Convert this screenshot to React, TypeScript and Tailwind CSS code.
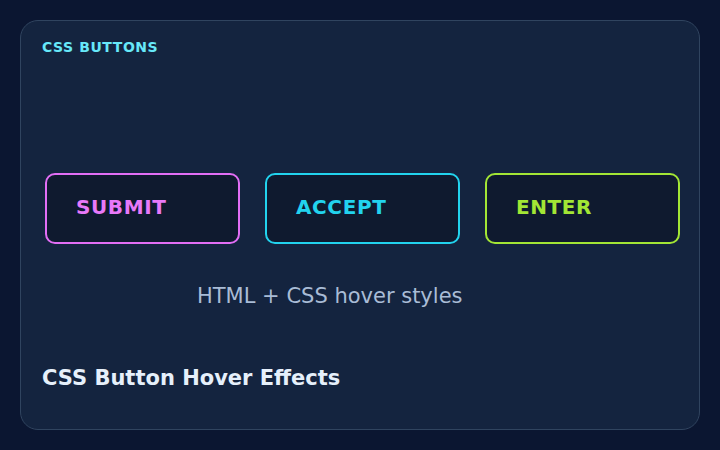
export default function App() {
  const buttons = [
    { label: "SUBMIT", cls: "border-[#e26ef5] text-[#e879f9]" },
    { label: "ACCEPT", cls: "border-[#22d3ee] text-[#22d3ee]" },
    { label: "ENTER", cls: "border-[#a3e635] text-[#a3e635]" },
  ];

  return (
    <div
      className="w-[720px] h-[450px] bg-[#0b1631] p-5"
      style={{ fontFamily: '"DejaVu Sans", sans-serif' }}
    >
      <div className="h-full rounded-[18px] border border-[#30445f] bg-[#14243f] px-[21px] pt-[18px] flex flex-col">
        <div className="text-[14px] leading-4 font-bold tracking-[0.04em] text-[#67e8f9]">
          CSS BUTTONS
        </div>

        {/* demo buttons */}
        <div className="mt-[118px] pl-[3px] flex gap-[25px]">
          {buttons.map((b) => (
            <button
              key={b.label}
              className={`shrink-0 w-[195px] h-[71px] rounded-[10px] border-2 bg-[#0f1a2f] pl-[29px] pb-[4px] text-left text-[20px] font-bold tracking-[0.03em] ${b.cls}`}
            >
              {b.label}
            </button>
          ))}
        </div>

        <div className="mt-[38px] ml-[155px] text-[21px] leading-7 text-[#a9bcd6]">
          HTML + CSS hover styles
        </div>

        <div className="mt-[54px] text-[21px] leading-7 font-bold text-[#e6f0fb]">
          CSS Button Hover Effects
        </div>
      </div>
    </div>
  );
}
